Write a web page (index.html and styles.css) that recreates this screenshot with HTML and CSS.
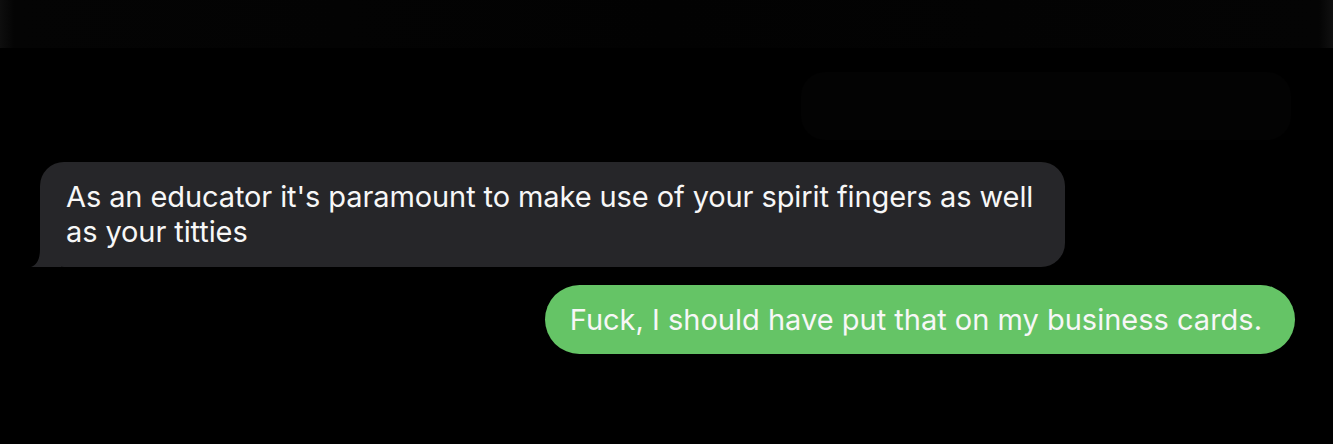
FILE: index.html
```html
<!DOCTYPE html>
<html lang="en">
<head>
<meta charset="utf-8">
<title>Messages</title>
<link rel="stylesheet" href="styles.css">
</head>
<body>
<div class="screen">
  <header class="topbar"></header>
  <div class="ghost-row">
    <div class="ghost-bubble"></div>
  </div>
  <div class="thread">
    <div class="row row-in">
      <div class="bubble bubble-in">As an educator it's paramount to make use of your spirit fingers as well as your titties</div>
    </div>
    <div class="row row-out">
      <div class="bubble bubble-out">Fuck, I should have put that on my business cards.</div>
    </div>
  </div>
</div>
</body>
</html>
```

FILE: styles.css
```css
* { box-sizing: border-box; }
html, body {
  margin: 0;
  padding: 0;
  background: #000;
}
.screen {
  width: 1333px;
  height: 444px;
  background: #000;
  overflow: hidden;
  font-family: Inter, "Liberation Sans", sans-serif;
  color: #fff;
}
.topbar {
  height: 48px;
  background: linear-gradient(90deg, #0e0e0e 0px, #040404 14px, #020202 50%, #040404 calc(100% - 14px), #101010 100%);
}
.ghost-row {
  display: flex;
  justify-content: flex-end;
  padding: 24px 42px 0 0;
  height: 114px;
}
.ghost-bubble {
  width: 490px;
  height: 68px;
  border-radius: 24px;
  background: #030303;
}
.thread {
  display: flex;
  flex-direction: column;
  gap: 18px;
}
.row { display: flex; }
.row-in { padding-left: 40px; }
.row-out { justify-content: flex-end; padding-right: 38px; }
.bubble {
  font-size: 29px;
  line-height: 35px;
  padding: 17px 26px 18px 26px;
  letter-spacing: -0.1px;
  color: #f7f7f7;
}
.bubble-in {
  position: relative;
  width: 1025px;
  background: #262629;
  border-radius: 24px;
}
.bubble-in::before {
  content: "";
  position: absolute;
  left: -9px;
  bottom: 0;
  width: 30px;
  height: 26px;
  background: #262629;
  clip-path: path("M9 0 L30 0 L30 26 L0 26 C6 24 9 18 9 8 Z");
}
.bubble-out {
  background: #65c466;
  border-radius: 35px;
  padding: 17px 33px 17px 25px;
  letter-spacing: 0;
}
```
